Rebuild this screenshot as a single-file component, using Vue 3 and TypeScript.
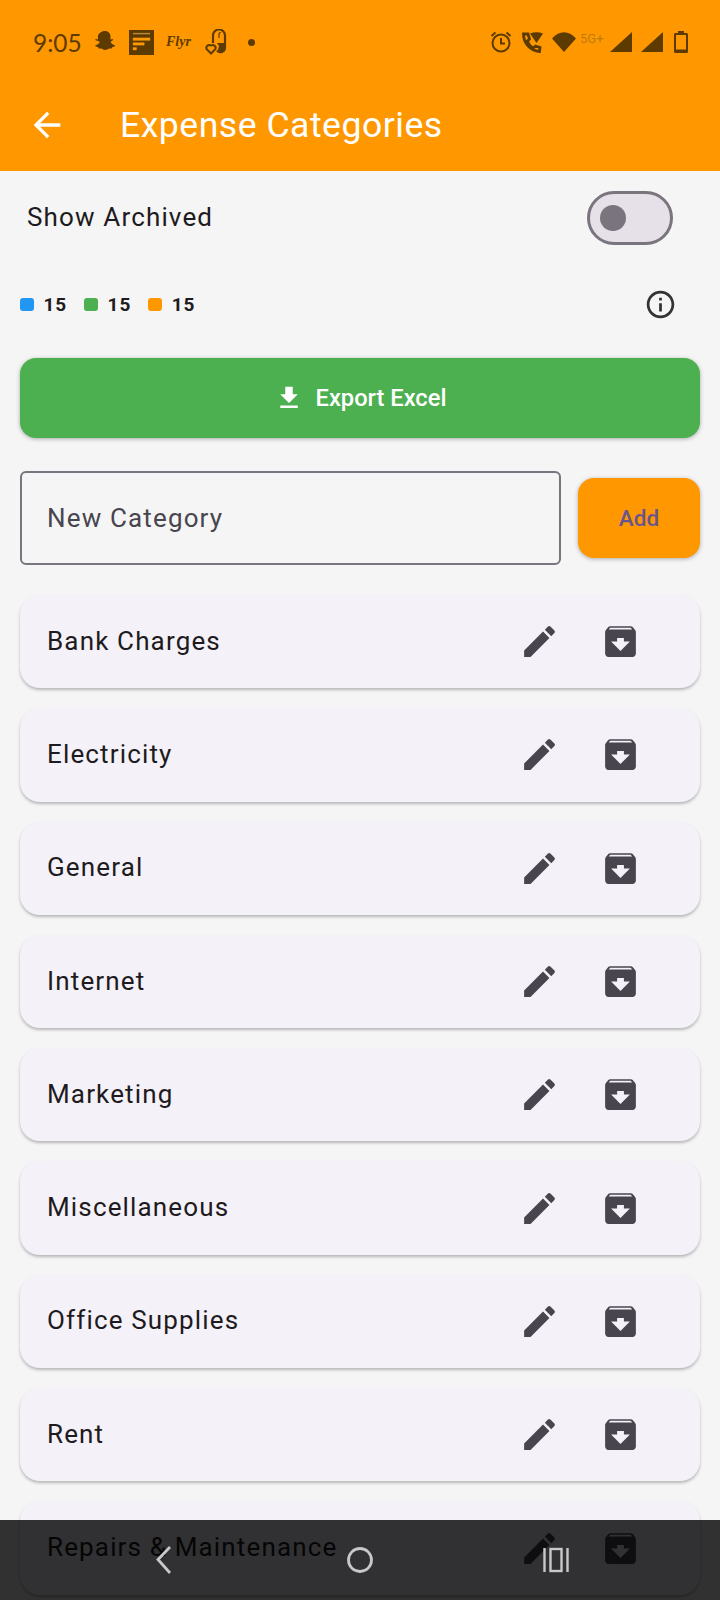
<script setup lang="ts">
const categories: string[] = ['Bank Charges','Electricity','General','Internet','Marketing','Miscellaneous','Office Supplies','Rent','Repairs & Maintenance']
const legend: string[] = ['#2196f3','#4caf50','#ff9800']
</script>

<template>
  <div class="screen">
    <header class="appbar">
      <div class="status">
        <div class="status-left">
          <span class="time">9:05</span>
          <svg class="ic" width="24" height="24" viewBox="0 0 24 24"><path fill="#5c3a00" d="M12 1c3.500 0 5.500 2.600 5.500 5.500v3l2.200-.4.500 1-2.600 1.600c.6 1.600 2.200 3 4.400 3.600v1l-2.800.9-.5 1.400-2.600-.1c-1.300.4-2.400 1.500-3.900 1.500s-2.600-1.100-3.900-1.500l-2.600.1-.5-1.400-2.800-.9v-1c2.200-.6 3.800-2 4.400-3.600L2.200 10.100l.5-1 2.200.4v-3C5 3.600 8.500 1 12 1z"/></svg>
          <svg class="ic first" width="25" height="25" viewBox="0 0 26 26"><rect width="26" height="26" fill="#5c3a00"/><rect x="4" y="3" width="18" height="1.500" fill="#b98a3a"/><rect x="4" y="8" width="18" height="3" fill="#ff9800"/><rect x="4" y="13" width="12" height="3" fill="#ff9800"/><rect x="4" y="18" width="4" height="3" fill="#ff9800"/></svg>
          <span class="flyr">Flyr</span>
          <svg class="ic pill" width="24" height="26" viewBox="0 0 24 26"><path fill="none" stroke="#5c3a00" stroke-width="2.200" d="M9 14V6.500a6 6 0 0 1 12 0V19a4.500 4.500 0 0 1-8 2.500"/><path fill="#5c3a00" d="M13 14h8v5a4.500 4.500 0 0 1-6 4l-1-2 1-4z"/><path fill="none" stroke="#5c3a00" stroke-width="1.200" d="M15 9V5.500q0-2 2-2"/><path fill="#ff9800" stroke="#5c3a00" stroke-width="2" d="M7 24.500 2.500 20a3 3 0 0 1 4.500-3.500 3 3 0 0 1 4.500 3.500z"/></svg>
          <span class="dot"></span>
        </div>
        <div class="status-right">
          <svg width="24" height="24" viewBox="0 0 24 24" fill="none" stroke="#5c3a00" stroke-width="2"><circle cx="12" cy="13" r="8.500"/><path d="M12 8v5.500h4M2.500 6l4-3.500M21.500 6l-4-3.500"/></svg>
          <svg class="call" width="24" height="24" viewBox="0 0 24 24"><path fill="none" stroke="#5c3a00" stroke-width="2.800" d="M3.500 4c0 9 6.500 16.500 16 17.500l.5-4-4.500-1.500-2 2c-3-1-5-4-6-7l2-2L8 4z"/><path fill="#5c3a00" d="M10 3.500c4-1.800 9-1.800 13 0L16.500 13z"/></svg>
          <svg class="wifi" width="24" height="20" viewBox="0 0 24 20"><path fill="#5c3a00" d="M0 6.500c7.500-8.500 16.500-8.500 24 0L12 20z"/></svg>
          <span class="fiveg">5G+</span>
          <svg class="sig" width="22" height="20" viewBox="0 0 22 20"><path fill="#5c3a00" d="M0 20 22 0v20z"/></svg>
          <svg class="sig2" width="22" height="20" viewBox="0 0 22 20"><path fill="#5c3a00" d="M0 20 22 0v20z"/></svg>
          <svg class="bat" width="14" height="22" viewBox="0 0 14 22"><path fill="#5c3a00" d="M4 0h6v2h2.500q1.500 0 1.500 1.500v17q0 1.500-1.500 1.500h-11Q0 22 0 20.500v-17Q0 2 1.500 2H4zM2 4v14.500h10V4z"/></svg>
        </div>
      </div>
      <div class="toolbar">
        <svg class="back" width="40" height="40" viewBox="0 0 24 24"><path fill="#fff" d="M20 11H7.830l5.590-5.590L12 4l-8 8 8 8 1.410-1.410L7.830 13H20z"/></svg>
        <span class="title">Expense Categories</span>
      </div>
    </header>

    <main class="content">
      <div class="archived">
        <span class="archived-label">Show Archived</span>
        <span class="switch"><span class="thumb"></span></span>
      </div>

      <div class="legend">
        <div class="legend-items">
          <span v-for="c in legend" :key="c" class="legend-item">
            <i class="swatch" :style="{ background: c }"></i>
            <b>15</b>
          </span>
        </div>
        <svg class="info" width="33" height="33" viewBox="0 0 24 24"><path fill="#333" d="M11 7h2v2h-2zm0 4h2v6h-2zm1-9C6.480 2 2 6.480 2 12s4.480 10 10 10 10-4.480 10-10S17.520 2 12 2zm0 18c-4.410 0-8-3.590-8-8s3.590-8 8-8 8 3.590 8 8-3.590 8-8 8z"/></svg>
      </div>

      <button class="export">
        <svg width="30" height="30" viewBox="0 0 24 24"><path fill="#fff" d="M19 9h-4V3H9v6H5l7 7 7-7zM5 18v2h14v-2H5z"/></svg>
        <span>Export Excel</span>
      </button>

      <div class="add-row">
        <div class="field">New Category</div>
        <button class="add">Add</button>
      </div>

      <div class="list">
        <div v-for="name in categories" :key="name" class="card">
          <span class="card-name">{{ name }}</span>
          <div class="actions">
            <svg width="41" height="41" viewBox="0 0 24 24"><path fill="#49454f" d="M3 17.250V21h3.750L17.810 9.940l-3.750-3.750L3 17.250zM20.710 7.040a1 1 0 0 0 0-1.410l-2.340-2.340a1 1 0 0 0-1.410 0l-1.830 1.830 3.750 3.750 1.830-1.830z"/></svg>
            <svg width="41" height="41" viewBox="0 0 24 24"><path fill="#49454f" d="M20.540 5.230l-1.390-1.680C18.880 3.210 18.470 3 18 3H6c-.47 0-.88.21-1.160.55L3.460 5.230C3.170 5.570 3 6.020 3 6.500V19c0 1.100.9 2 2 2h14c1.100 0 2-.9 2-2V6.500c0-.48-.17-.93-.46-1.270zM12 17.500 6.500 12H10v-2h4v2h3.500L12 17.500zM5.120 5l.81-1h12l.94 1H5.120z"/></svg>
          </div>
        </div>
      </div>
    </main>

    <nav class="navbar">
      <svg class="nav-back" width="24" height="32" viewBox="0 0 24 32"><path fill="none" stroke="#c8c8c8" stroke-width="2.800" d="M17 3 5 15.500 17 29"/></svg>
      <svg class="nav-home" width="28" height="28" viewBox="0 0 28 28"><circle cx="14" cy="14" r="11.500" fill="none" stroke="#c8c8c8" stroke-width="2.800"/></svg>
      <svg class="nav-recent" width="26" height="26" viewBox="0 0 26 26" fill="none" stroke="#c8c8c8" stroke-width="2.400"><path d="M1.500 1v24M24.500 1v24"/><rect x="7.500" y="2" width="11" height="22"/></svg>
    </nav>
  </div>
</template>

<style>
html, body { margin: 0; padding: 0; background: #f5f5f5; }
</style>

<style scoped>
.screen {
  position: relative;
  width: 720px;
  height: 1600px;
  overflow: hidden;
  background: #f5f5f5;
  font-family: Roboto, "Liberation Sans", sans-serif;
  color: #1d1b20;
}
.appbar {
  height: 171px;
  background: #ff9800;
  display: flex;
  flex-direction: column;
}
.status {
  height: 84px;
  padding: 0 32px 0 33px;
  box-sizing: border-box;
  display: flex;
  justify-content: space-between;
  align-items: center;
}
.status-left, .status-right { display: flex; align-items: center; }
.time {
  font-family: Lato, Roboto, sans-serif;
  font-size: 24.500px;
  color: #5c3a00;
  width: 48px;
  margin-right: 12px;
}
.ic { flex: none; }
.first { margin-left: 12px; }
.flyr {
  font-family: "Liberation Serif", serif;
  font-style: italic;
  font-weight: 700;
  font-size: 14px;
  width: 25px;
  color: #5c3a00;
  margin-left: 12px;
}
.pill { margin-left: 13px; }
.dot {
  width: 7px;
  height: 7px;
  border-radius: 50%;
  background: #5c3a00;
  margin-left: 20px;
}
.call { margin-left: 7px; }
.wifi { margin-left: 8px; }
.fiveg {
  font-size: 13px;
  color: #bd7c0c;
  margin-bottom: 8px;
  width: 27px;
  margin-left: 4px;
}
.sig { margin-left: 3px; }
.sig2 { margin-left: 9px; }
.bat { margin-left: 11px; }
.toolbar {
  flex: 1;
  display: flex;
  align-items: center;
  padding: 0 0 6px 27px;
}
.back { margin-right: 53px; }
.title {
  color: #fff;
  font-size: 35.600px;
  letter-spacing: 0.5px;
}
.content { padding: 0 20px; }
.archived {
  height: 94px;
  box-sizing: border-box;
  padding: 0 27px 0 7px;
  display: flex;
  align-items: center;
  justify-content: space-between;
}
.archived-label { font-size: 26px; letter-spacing: 1.150px; padding-bottom: 2px; }
.switch {
  width: 86px;
  height: 54px;
  box-sizing: border-box;
  border: 3px solid #79747e;
  border-radius: 27px;
  background: #e6e0e9;
  display: flex;
  align-items: center;
  padding-left: 10px;
}
.thumb {
  width: 26px;
  height: 26px;
  border-radius: 50%;
  background: #79747e;
}
.legend {
  height: 32px;
  margin-top: 23px;
  padding-right: 23.500px;
  display: flex;
  align-items: center;
  justify-content: space-between;
}
.legend-items { display: flex; gap: 17px; padding-top: 1px; }
.legend-item { display: flex; align-items: center; gap: 10px; }
.swatch { width: 13.500px; height: 13.500px; border-radius: 3px; }
.legend-item b { font-size: 19px; letter-spacing: 0.9px; font-weight: 700; color: #1d1b20; }
.export {
  display: flex;
  align-items: center;
  justify-content: center;
  gap: 12px;
  width: 680px;
  height: 80px;
  margin-top: 38px;
  border: 0;
  border-radius: 16px;
  background: #4caf50;
  color: #fff;
  font-family: inherit;
  font-size: 23.700px;
  font-weight: 500;
  box-shadow: 0 1px 4px rgba(0, 0, 0, .3);
}
.add-row {
  display: flex;
  align-items: center;
  gap: 17px;
  margin-top: 33px;
}
.field {
  flex: 1;
  height: 94px;
  box-sizing: border-box;
  border: 2px solid #79747e;
  border-radius: 6px;
  padding-left: 25px;
  display: flex;
  align-items: center;
  font-size: 26px;
  letter-spacing: 1.150px;
  color: #49454f;
}
.add {
  width: 122px;
  height: 80px;
  border: 0;
  border-radius: 16px;
  background: #ff9800;
  color: #68548e;
  font-family: inherit;
  font-size: 22.500px;
  font-weight: 500;
  box-shadow: 0 1px 4px rgba(0, 0, 0, .3);
}
.list {
  display: flex;
  flex-direction: column;
  gap: 20px;
  margin-top: 30px;
}
.card {
  flex: none;
  height: 93.300px;
  padding: 0 59.500px 0 27px;
  background: #f5f1f8;
  border-radius: 20px;
  box-shadow: 0 2px 3px rgba(0, 0, 0, .25);
  display: flex;
  align-items: center;
  justify-content: space-between;
}
.card-name { font-size: 26px; letter-spacing: 1.150px; padding-bottom: 2px; }
.actions { display: flex; gap: 39.500px; }
.navbar {
  position: absolute;
  left: 0;
  right: 0;
  bottom: 0;
  height: 80px;
  background: rgba(0, 0, 0, .8);
}
.navbar svg { position: absolute; }
.nav-back { left: 153px; top: 24px; }
.nav-home { left: 346px; top: 26px; }
.nav-recent { left: 543px; top: 27px; }
</style>
